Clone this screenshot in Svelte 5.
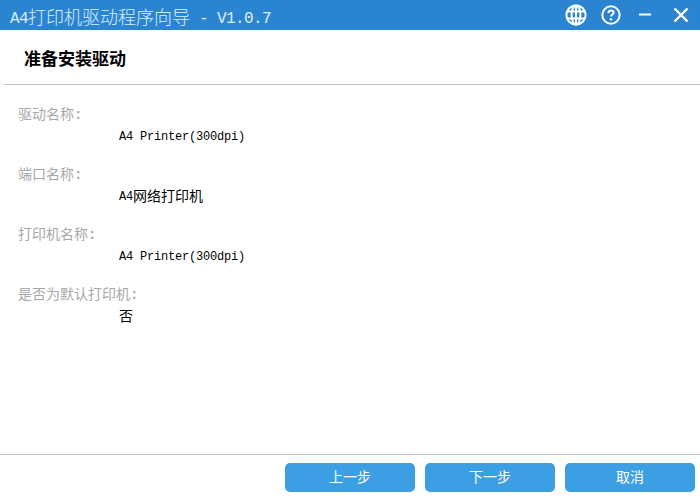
<script>
	const fields = [
		{ label: "驱动名称", value: [["en", "A4 Printer(300dpi)"]] },
		{ label: "端口名称", value: [["en", "A4"], ["zh", "网络打印机"]] },
		{ label: "打印机名称", value: [["en", "A4 Printer(300dpi)"]] },
		{ label: "是否为默认打印机", value: [["zh", "否"]] }
	];
</script>

<div class="wizard">
	<header class="titlebar">
		<span class="title"><span class="en">A4</span>打印机驱动程序向导<span class="en">{" - V1.0.7"}</span></span>
		<div class="controls">
			<svg class="icon" width="24" height="24" viewBox="0 0 24 24">
				<circle cx="12" cy="12" r="9.6" />
				<ellipse cx="12" cy="12" rx="4.4" ry="9.6" />
				<path d="M12 2.4V21.6M3.2 8.6H20.8M3.2 15.4H20.8" />
			</svg>
			<svg class="icon help" width="20" height="20" viewBox="0 0 20 20">
				<circle cx="10" cy="10" r="8.7" />
				<path d="M7.4 7.9C7.4 6.3 8.6 5.4 10 5.4C11.5 5.4 12.6 6.3 12.6 7.7C12.6 9.5 10 9.6 10 11.6" />
				<circle class="dot" cx="10" cy="14.2" r="1.2" />
			</svg>
			<svg class="icon minus" width="14" height="14" viewBox="0 0 14 14">
				<path d="M1 6.5H13" />
			</svg>
			<svg class="icon close" width="16" height="16" viewBox="0 0 16 16">
				<path d="M1.5 1.5L14.5 14.5M14.5 1.5L1.5 14.5" />
			</svg>
		</div>
	</header>

	<div class="heading">
		<h1>准备安装驱动</h1>
	</div>

	<main class="fields">
		{#each fields as field}
			<div class="field">
				<div class="label">{field.label}<span class="colon">:</span></div>
				<div class="value">
					{#each field.value as [kind, text]}
						<span class={kind}>{text}</span>
					{/each}
				</div>
			</div>
		{/each}
	</main>

	<footer class="footer">
		<button>上一步</button>
		<button>下一步</button>
		<button>取消</button>
	</footer>
</div>

<style>
	:global(body) {
		margin: 0;
	}

	.wizard {
		width: 700px;
		height: 500px;
		display: flex;
		flex-direction: column;
		background: #fff;
		font-family: "Noto Sans CJK SC", sans-serif;
		overflow: hidden;
	}

	.titlebar {
		height: 30px;
		flex: none;
		display: flex;
		align-items: center;
		justify-content: space-between;
		background: #2b84d0;
		padding: 0 11px 0 10px;
		color: #dcefff;
	}

	.title {
		align-self: flex-start;
		font-size: 18px;
		line-height: 32px;
		font-weight: 300;
		white-space: pre;
	}

	.title .en {
		font-family: "Liberation Mono", monospace;
		font-size: 16px;
		letter-spacing: -0.6px;
		vertical-align: 1px;
	}

	.controls {
		display: flex;
		align-items: center;
	}

	.icon {
		fill: none;
		stroke: #fff;
		stroke-width: 2;
		display: block;
	}

	.help {
		margin-left: 13px;
	}

	.help .dot {
		fill: #fff;
		stroke: none;
	}

	.minus {
		margin-left: 17px;
	}

	.close {
		margin-left: 21px;
		stroke-width: 2.4;
	}

	.heading {
		height: 54px;
		flex: none;
		margin-left: 4px;
		padding-left: 20px;
		display: flex;
		align-items: center;
		border-bottom: 1px solid #c4c4c4;
	}

	h1 {
		margin: 0;
		font-size: 17px;
		font-weight: bold;
		color: #000;
	}

	.fields {
		flex: 1;
		padding: 18px 0 0 18px;
		display: flex;
		flex-direction: column;
		gap: 16px;
	}

	.field {
		height: 44px;
	}

	.label {
		height: 20px;
		font-size: 14px;
		line-height: 20px;
		color: #a8a8a8;
		margin-bottom: 2px;
	}

	.colon {
		font-family: "Liberation Mono", monospace;
		font-weight: bold;
	}

	.value {
		margin-left: 101px;
		height: 20px;
		font-size: 14px;
		line-height: 20px;
		color: #000;
		display: flex;
		align-items: center;
	}

	.value .en {
		font-family: "Liberation Mono", monospace;
		font-size: 12px;
		letter-spacing: -0.2px;
		padding-top: 4px;
		white-space: pre;
	}

	.footer {
		height: 46px;
		flex: none;
		display: flex;
		justify-content: flex-end;
		align-items: flex-start;
		gap: 10px;
		padding: 8px 5px 0 0;
		box-sizing: border-box;
		border-top: 1px solid #c4c4c4;
	}

	button {
		width: 130px;
		height: 29px;
		border: none;
		border-radius: 5px;
		background: #3d9fe3;
		color: #fff;
		font-family: "Noto Sans CJK SC", sans-serif;
		font-size: 14px;
		line-height: 20px;
		padding: 0 0 4px;
	}
</style>
